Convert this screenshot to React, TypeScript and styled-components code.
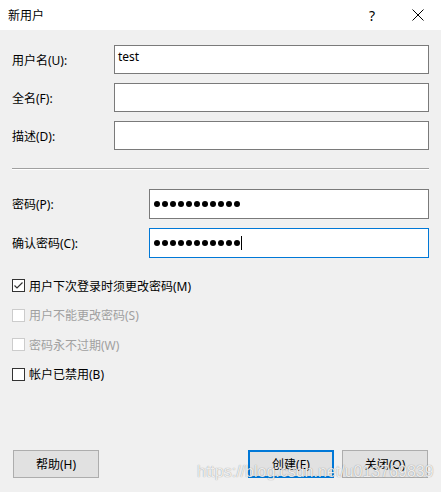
import styled, { createGlobalStyle } from 'styled-components';

const GlobalStyle = createGlobalStyle`
html, body {
    margin: 0;
    padding: 0;
    background: #f0f0f0;
}
* {
    box-sizing: border-box;
}
`;

const FONT = `"Noto Sans", "Noto Sans CJK SC", sans-serif`;

const WindowDiv = styled.div`
position: relative;
width: 441px;
height: 492px;
display: flex;
flex-direction: column;
background-color: #f0f0f0;
font-family: ${FONT};
font-size: 12px;
color: #000;
overflow: hidden;
`;

const TitleBar = styled.div`
height: 30px;
flex-shrink: 0;
display: flex;
align-items: center;
background-color: #fff;
padding-left: 8px;
`;

const TitleText = styled.div`
flex: 1;
font-size: 12px;
`;

const TitleButton = styled.div`
width: 46px;
height: 30px;
display: flex;
align-items: center;
justify-content: center;
font-size: 14px;
`;

const Body = styled.div`
flex: 1;
display: flex;
flex-direction: column;
padding: 15px 12px 14px 12px;
`;

const FieldGrid = styled.div<{ labelWidth: number, rowHeight: number }>`
display: grid;
grid-template-columns: ${props => props.labelWidth}px 1fr;
grid-auto-rows: ${props => props.rowHeight}px;
row-gap: 9px;
align-items: center;
`;

const Label = styled.div`
white-space: nowrap;
`;

const TextBox = styled.div<{ focused?: boolean }>`
height: 100%;
background-color: #fff;
border: 1px solid ${props => props.focused ? '#0078d7' : '#7a7a7a'};
padding: 3px 3px 0 3px;
line-height: 16px;
`;

const PasswordBox = styled(TextBox)`
display: flex;
align-items: center;
padding: 0 0 1px 4px;
`;

const Dot = styled.span`
display: inline-block;
width: 6px;
height: 6px;
border-radius: 50%;
background-color: #000;
margin-right: 2px;
`;

const Caret = styled.span`
display: inline-block;
width: 1px;
height: 14px;
background-color: #000;
margin-left: -1px;
`;

const Separator = styled.div`
height: 2px;
margin: 18px 0 19px 0;
border-top: 1px solid #a0a0a0;
border-bottom: 1px solid #fff;
`;

const CheckList = styled.div`
display: flex;
flex-direction: column;
margin-top: 13px;
`;

const CheckRow = styled.div<{ disabled?: boolean }>`
height: 29.5px;
display: flex;
align-items: center;
gap: 4px;
color: ${props => props.disabled ? '#a0a0a0' : '#000'};
`;

const CheckBox = styled.span<{ disabled?: boolean }>`
width: 13px;
height: 13px;
flex-shrink: 0;
display: flex;
align-items: center;
justify-content: center;
background-color: #fff;
border: 1px solid ${props => props.disabled ? '#cccccc' : '#333'};
`;

const ButtonRow = styled.div`
margin-top: auto;
display: flex;
gap: 8px;
padding: 0 1px;
`;

const Button = styled.div<{ primary?: boolean }>`
width: 86px;
height: 28px;
display: flex;
align-items: center;
justify-content: center;
background-color: #e1e1e1;
border: ${props => props.primary ? '2px solid #0078d7' : '1px solid #adadad'};
`;

const Spacer = styled.div`
flex: 1;
`;

// blog watermark lying over the bottom-right corner of the screenshot
const Watermark = styled.div`
position: absolute;
left: 197px;
top: 463px;
font-family: "Liberation Sans", Arial, sans-serif;
font-size: 16px;
line-height: 18px;
color: rgba(255, 255, 255, 0.85);
text-shadow: 0 0 1px rgba(0, 0, 0, 0.45);
pointer-events: none;
white-space: nowrap;
`;

function Dots({ count }: { count: number }) {
    return (
        <>
            {Array.from({ length: count }).map((_, i) => <Dot key={i}/>)}
        </>
    );
}

function Check({ checked, disabled, label }: { checked?: boolean, disabled?: boolean, label: string }) {
    return (
        <CheckRow disabled={disabled}>
            <CheckBox disabled={disabled}>
                {checked &&
                    <svg width="11" height="11" viewBox="0 0 11 11">
                        <polyline points="1.5,5.5 4,8 9.5,2.5" fill="none" stroke="#333" strokeWidth="1.2"/>
                    </svg>
                }
            </CheckBox>
            {label}
        </CheckRow>
    );
}

export default function App() {
    return (
        <>
            <GlobalStyle/>
            <WindowDiv>
                <TitleBar>
                    <TitleText>新用户</TitleText>
                    <TitleButton>?</TitleButton>
                    <TitleButton>
                        <svg width="12" height="12" viewBox="0 0 12 12">
                            <path d="M0.5 0.5 L11.5 11.5 M11.5 0.5 L0.5 11.5" stroke="#000" strokeWidth="1"/>
                        </svg>
                    </TitleButton>
                </TitleBar>
                <Body>
                    <FieldGrid labelWidth={102} rowHeight={29}>
                        <Label>用户名(U):</Label>
                        <TextBox>test</TextBox>
                        <Label>全名(F):</Label>
                        <TextBox/>
                        <Label>描述(D):</Label>
                        <TextBox/>
                    </FieldGrid>
                    <Separator/>
                    <FieldGrid labelWidth={137} rowHeight={30}>
                        <Label>密码(P):</Label>
                        <PasswordBox><Dots count={11}/></PasswordBox>
                        <Label>确认密码(C):</Label>
                        <PasswordBox focused><Dots count={11}/><Caret/></PasswordBox>
                    </FieldGrid>
                    <CheckList>
                        <Check checked label="用户下次登录时须更改密码(M)"/>
                        <Check disabled label="用户不能更改密码(S)"/>
                        <Check disabled label="密码永不过期(W)"/>
                        <Check label="帐户已禁用(B)"/>
                    </CheckList>
                    <ButtonRow>
                        <Button>帮助(H)</Button>
                        <Spacer/>
                        <Button primary>创建(E)</Button>
                        <Button>关闭(O)</Button>
                    </ButtonRow>
                </Body>
                <Watermark>https://blog.csdn.net/u013769839</Watermark>
            </WindowDiv>
        </>
    );
}
